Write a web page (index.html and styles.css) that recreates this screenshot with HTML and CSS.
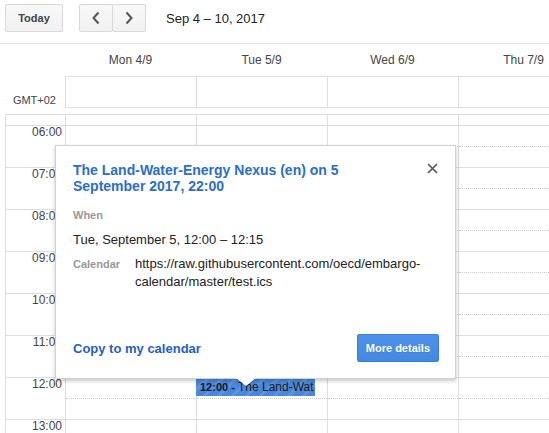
FILE: index.html
```html
<!DOCTYPE html>
<html lang="en">
<head>
<meta charset="utf-8">
<title>Calendar</title>
<link rel="stylesheet" href="styles.css">
</head>
<body>
<div class="app">
  <div class="toolbar">
    <button class="btn today">Today</button>
    <div class="nav">
      <button class="btn nav-btn"><svg width="10" height="14" viewBox="0 0 10 14"><polyline points="7.5,1.5 2.5,7 7.5,12.5" fill="none" stroke="#555" stroke-width="2"/></svg></button>
      <button class="btn nav-btn"><svg width="10" height="14" viewBox="0 0 10 14"><polyline points="2.5,1.5 7.5,7 2.5,12.5" fill="none" stroke="#555" stroke-width="2"/></svg></button>
    </div>
    <span class="range">Sep 4 – 10, 2017</span>
  </div>

  <div class="head-days">
    <div class="head-gutter"></div>
    <div class="day-name">Mon 4/9</div>
    <div class="day-name">Tue 5/9</div>
    <div class="day-name">Wed 6/9</div>
    <div class="day-name">Thu 7/9</div>
  </div>
  <div class="allday">
    <div class="tz"><span>GMT+02</span></div>
    <div class="ad-cells">
      <div class="ad-cell"></div><div class="ad-cell"></div><div class="ad-cell"></div><div class="ad-cell"></div>
    </div>
  </div>

  <div class="grid">
    <div class="row first"><div class="g"></div><div class="c"></div><div class="c"></div><div class="c"></div><div class="c"></div></div>
    <div class="row hour"><div class="g">06:00</div><div class="c"></div><div class="c"></div><div class="c"></div><div class="c"></div></div>
    <div class="row hour"><div class="g">07:00</div><div class="c"></div><div class="c"></div><div class="c"></div><div class="c"></div></div>
    <div class="row hour"><div class="g">08:00</div><div class="c"></div><div class="c"></div><div class="c"></div><div class="c"></div></div>
    <div class="row hour"><div class="g">09:00</div><div class="c"></div><div class="c"></div><div class="c"></div><div class="c"></div></div>
    <div class="row hour"><div class="g">10:00</div><div class="c"></div><div class="c"></div><div class="c"></div><div class="c"></div></div>
    <div class="row hour"><div class="g">11:00</div><div class="c"></div><div class="c"></div><div class="c"></div><div class="c"></div></div>
    <div class="row hour"><div class="g">12:00</div><div class="c"></div><div class="c"><div class="event"><b>12:00 -</b> The Land-Wat</div></div><div class="c"></div><div class="c"></div></div>
    <div class="row hour"><div class="g">13:00</div><div class="c"></div><div class="c"></div><div class="c"></div><div class="c"></div></div>
  </div>

  <div class="popup">
    <div class="pop-head">
      <div class="pop-title">The Land-Water-Energy Nexus (en) on 5 September 2017, 22:00</div>
      <svg class="close" width="11" height="11" viewBox="0 0 11 11"><path d="M1 1L10 10M10 1L1 10" stroke="#555" stroke-width="1.7" fill="none"/></svg>
    </div>
    <div class="label when">When</div>
    <div class="when-val">Tue, September 5, 12:00 – 12:15</div>
    <div class="cal-row">
      <div class="label cal-label">Calendar</div>
      <div class="cal-val">https://raw.githubusercontent.com/oecd/embargo-<br>calendar/master/test.ics</div>
    </div>
    <div class="pop-foot">
      <span class="copy">Copy to my calendar</span>
      <button class="more">More details</button>
    </div>
  </div>
</div>
</body>
</html>
```

FILE: styles.css
```css
* { box-sizing: border-box; }
html, body { margin: 0; padding: 0; }
body {
  font-family: "Liberation Sans", Arial, sans-serif;
  color: #222;
  background: #fff;
  overflow: hidden;
  width: 549px;
  height: 433px;
}
.app { position: relative; width: 549px; height: 433px; overflow: hidden; }

.toolbar {
  display: flex;
  align-items: center;
  height: 44px;
  padding: 4px 5px 11px 5px;
  border-bottom: 1px solid #e5e5e5;
}
.btn {
  font-family: inherit;
  background: linear-gradient(#f8f8f8, #f1f1f1);
  border: 1px solid #d9d9d9;
  border-radius: 2px;
  height: 28px;
  margin: 0;
  padding: 0;
  color: #444;
  cursor: pointer;
}
.today { width: 58px; font-size: 11px; font-weight: bold; }
.nav { display: flex; margin-left: 16px; }
.nav-btn { width: 34px; display: flex; align-items: center; justify-content: center; }
.nav-btn + .nav-btn { margin-left: -1px; width: 34px; }
.range { margin-left: 20px; font-size: 13px; line-height: 15px; color: #222; }

.head-days { display: flex; height: 32px; padding-top: 9px; }
.head-gutter { width: 65px; flex: none; }
.day-name {
  width: 131px; flex: none;
  text-align: center;
  font-size: 12px; line-height: 14px;
  color: #444;
}

.allday { display: flex; height: 32px; }
.tz {
  width: 65px; flex: none;
  display: flex; align-items: flex-end; justify-content: flex-end;
  padding: 0 9px 1px 0;
  font-size: 11px; line-height: 13px; color: #444;
}
.ad-cells {
  display: flex; flex: 1;
  border-top: 1px solid #ddd;
  border-bottom: 1px solid #ddd;
}
.ad-cell { width: 131px; flex: none; border-left: 1px solid #ddd; }

.grid {
  margin: 6px 0 0 5px;
  border-top: 1px solid #ddd;
  border-left: 1px solid #ddd;
}
.row { display: flex; border-bottom: 1px solid #ddd; }
.row.first { height: 11px; }
.row.hour { height: 42px; }
.g {
  width: 59px; flex: none;
  text-align: right;
  padding-right: 3px;
  font-size: 12px; line-height: 12px;
  color: #444;
}
.c { width: 131px; flex: none; border-left: 1px solid #ddd; position: relative; }
.row.hour .c::before {
  content: "";
  position: absolute; left: 0; right: 0; top: 20px;
  border-top: 1px dotted #ccc;
}
.event {
  position: absolute; left: -1px; top: 0;
  width: 119px; height: 18px;
  padding: 0 4px;
  background: repeating-linear-gradient(135deg, #4a87dc 0 7px, #5c94e0 7px 10px);
  color: #1a1a1a;
  font-size: 12px; line-height: 19px;
  white-space: nowrap;
  z-index: 1;
}
.event b { font-size: 11px; }

.popup {
  position: absolute; left: 55px; top: 145px;
  width: 401px; height: 234px;
  background: #fff;
  border: 1px solid rgba(0,0,0,0.18);
  box-shadow: 0 2px 4px rgba(0,0,0,0.22);
  padding: 16px 17px 16px 17px;
  display: flex; flex-direction: column;
  z-index: 5;
}
.popup::before, .popup::after {
  content: "";
  position: absolute;
  left: 180px;
  width: 0; height: 0;
  border-left: 10px solid transparent;
  border-right: 10px solid transparent;
}
.popup::before { bottom: -10px; border-top: 9px solid rgba(0,0,0,0.15); }
.popup::after { bottom: -8px; border-top: 8px solid #fff; }

.pop-head { display: flex; justify-content: space-between; align-items: flex-start; }
.pop-title {
  width: 330px;
  font-size: 14px; line-height: 16px; font-weight: bold;
  color: #2a6dcd;
}
.close { margin-top: 1px; flex: none; }
.label { font-size: 11px; font-weight: bold; color: #999; line-height: 13px; }
.when { margin-top: 15px; }
.when-val { margin-top: 9px; font-size: 13px; line-height: 18px; color: #222; }
.cal-row { display: flex; align-items: baseline; margin-top: 6px; }
.cal-label { width: 62px; flex: none; }
.cal-val { font-size: 13px; line-height: 18px; color: #222; }

.pop-foot { margin-top: auto; display: flex; justify-content: space-between; align-items: center; }
.copy { font-size: 13px; font-weight: bold; color: #1f5ec6; }
.more {
  font-family: inherit;
  height: 28px;
  padding: 0 8px;
  margin: 0 -1px 0 0;
  font-size: 11px; font-weight: bold;
  color: #fff;
  background: linear-gradient(#4d91ea, #4588e3);
  border: 1px solid #3a7fdc;
  border-radius: 2px;
  text-shadow: 0 1px rgba(0,0,0,0.1);
}
```
